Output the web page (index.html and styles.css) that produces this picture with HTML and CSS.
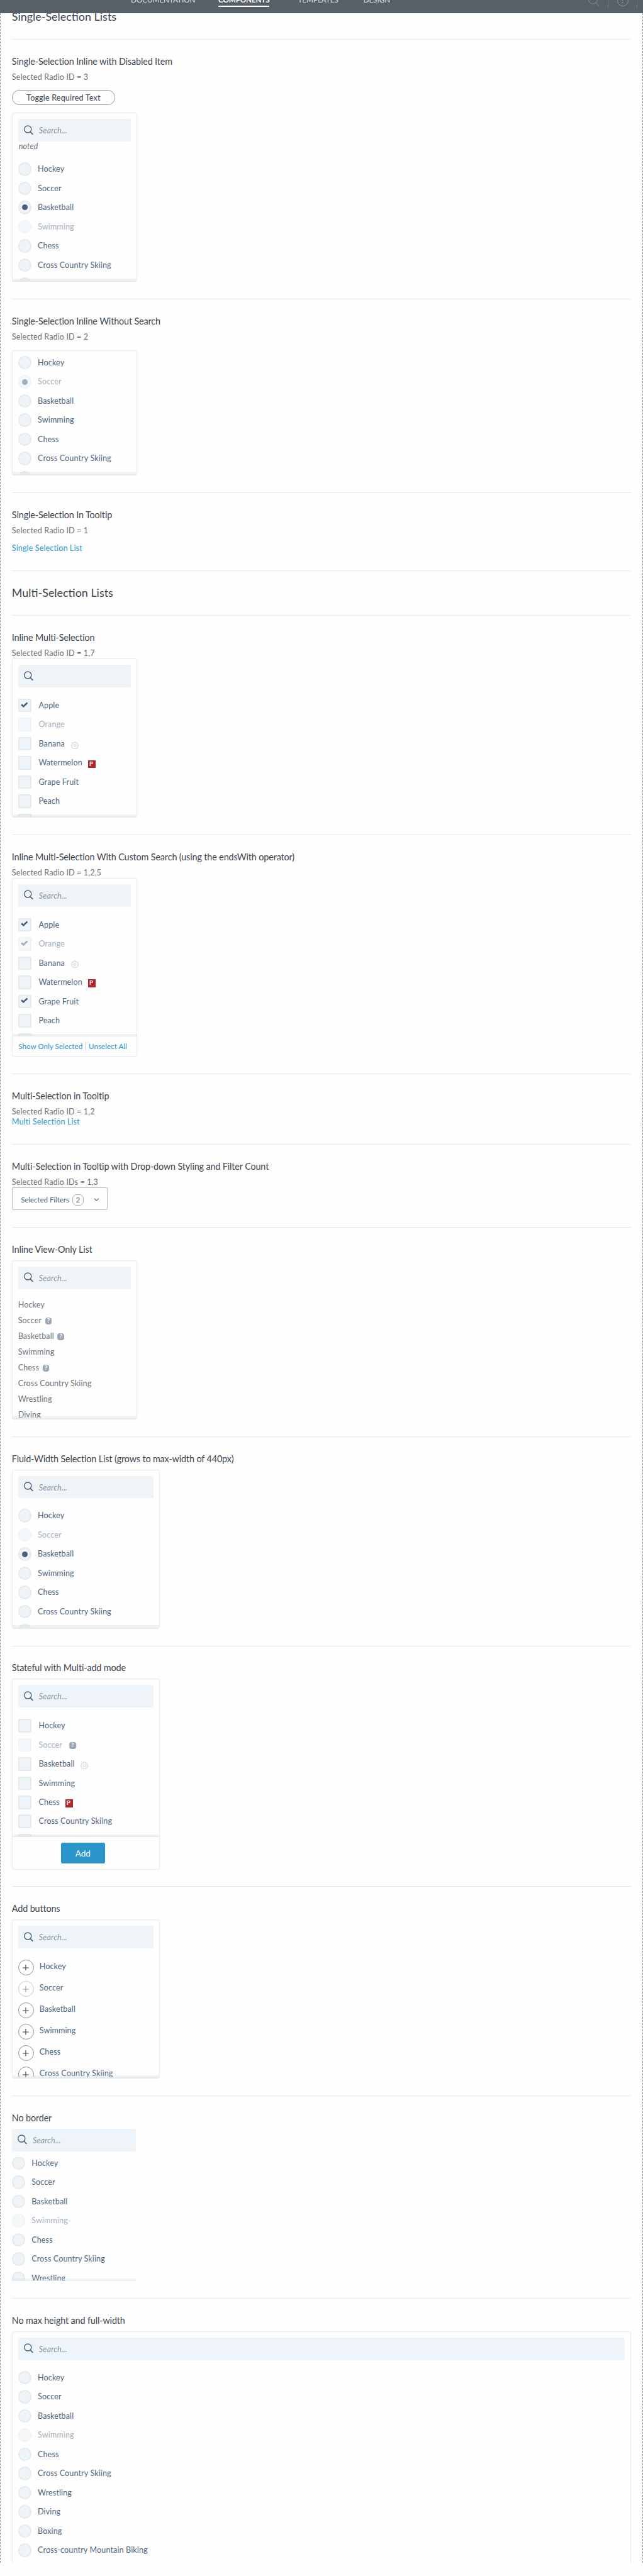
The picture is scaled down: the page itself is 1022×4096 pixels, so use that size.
FILE: index.html
```html
<!DOCTYPE html>
<html lang="en">
<head>
<meta charset="utf-8">
<title>Selection Lists</title>
<link rel="stylesheet" href="styles.css">
</head>
<body>
<svg class="defs" width="0" height="0" aria-hidden="true">
  <symbol id="search" viewBox="0 0 17 17"><circle cx="7" cy="7" r="6.2" fill="none" stroke="currentColor" stroke-width="1.6"/><path d="M11.2 11.6L16 16.4" stroke="currentColor" stroke-width="1.9"/></symbol>
  <symbol id="check" viewBox="0 0 13 10"><path d="M1.2 4.9L4.8 8L11.6 1.6" fill="none" stroke="currentColor" stroke-width="3"/></symbol>
  <symbol id="gear" viewBox="0 0 14 14"><path d="M5.9 .8h2.2l.4 1.7 1 .4 1.5-.9 1.5 1.5-.9 1.5.4 1 1.3.3v1.9l-1.3.4-.4 1 .9 1.5-1.5 1.5-1.5-.9-1 .4-.4 1.4H5.9l-.4-1.4-1-.4-1.5.9-1.5-1.5.9-1.5-.4-1-1.3-.4V6.3l1.300-.3.4-1-.9-1.500L3 2l1.500.9 1-.4z" fill="none" stroke="currentColor" stroke-width=".8"/><circle cx="7" cy="7.2" r="2.1" fill="none" stroke="currentColor" stroke-width=".8"/></symbol>
  <symbol id="plus" viewBox="0 0 11 11"><path d="M5.5 0V11M0 5.5H11" stroke="currentColor" stroke-width="1.2"/></symbol>
</svg>

<header class="topbar">
  <nav class="nav">
    <a class="nav-item nav-docs">DOCUMENTATION</a>
    <a class="nav-item nav-comp active">COMPONENTS</a>
    <a class="nav-item nav-temp">TEMPLATES</a>
    <a class="nav-item nav-design">DESIGN</a>
  </nav>
  <div class="tools">
    <svg class="tool-search" viewBox="0 0 20 20"><circle cx="8.2" cy="7.2" r="7.6" fill="none" stroke="currentColor"/><path d="M13.6 12.6L19.5 19.5" stroke="currentColor"/></svg>
    <i class="tool-line"></i>
    <span class="tool-help">?</span>
    <i class="tool-line"></i>
  </div>
</header>

<main class="page">
  <h2 class="title first">Single-Selection Lists</h2>

  <section class="demo">
    <h3>Single-Selection Inline with Disabled Item</h3>
    <p class="status spaced">Selected Radio ID = 3</p>
    <button class="pill">Toggle Required Text</button>
    <div class="card h300">
      <div class="search"><svg><use href="#search"/></svg><span>Search...</span></div>
      <div class="note">noted</div>
      <ul class="list radios after-note">
        <li><i class="radio"></i>Hockey</li>
        <li><i class="radio"></i>Soccer</li>
        <li><i class="radio on"></i>Basketball</li>
        <li class="off"><i class="radio"></i>Swimming</li>
        <li><i class="radio"></i>Chess</li>
        <li><i class="radio"></i>Cross Country Skiing</li>
        <li><i class="radio"></i></li>
      </ul>
    </div>
  </section>

  <section class="demo">
    <h3>Single-Selection Inline Without Search</h3>
    <p class="status spaced">Selected Radio ID = 2</p>
    <div class="card h222">
      <ul class="list radios no-search">
        <li><i class="radio"></i>Hockey</li>
        <li class="off"><i class="radio on"></i>Soccer</li>
        <li><i class="radio"></i>Basketball</li>
        <li><i class="radio"></i>Swimming</li>
        <li><i class="radio"></i>Chess</li>
        <li><i class="radio"></i>Cross Country Skiing</li>
        <li><i class="radio"></i></li>
      </ul>
    </div>
  </section>

  <section class="demo">
    <h3>Single-Selection In Tooltip</h3>
    <p class="status spaced">Selected Radio ID = 1</p>
    <a class="link">Single Selection List</a>
  </section>

  <h2 class="title">Multi-Selection Lists</h2>

  <section class="demo">
    <h3>Inline Multi-Selection</h3>
    <p class="status">Selected Radio ID = 1,7</p>
    <div class="card">
      <div class="search"><svg><use href="#search"/></svg></div>
      <ul class="list checks">
        <li><i class="box"><svg><use href="#check"/></svg></i>Apple</li>
        <li class="off"><i class="box"></i>Orange</li>
        <li><i class="box"></i>Banana<svg class="gear"><use href="#gear"/></svg></li>
        <li><i class="box"></i>Watermelon<b class="flag">P</b></li>
        <li><i class="box"></i>Grape Fruit</li>
        <li><i class="box"></i>Peach</li>
        <li><i class="box"></i></li>
      </ul>
    </div>
  </section>

  <section class="demo">
    <h3>Inline Multi-Selection With Custom Search (using the endsWith operator)</h3>
    <p class="status">Selected Radio ID = 1,2,5</p>
    <div class="card h317">
      <div class="search"><svg><use href="#search"/></svg><span>Search...</span></div>
      <ul class="list checks">
        <li><i class="box"><svg><use href="#check"/></svg></i>Apple</li>
        <li class="off"><i class="box"><svg><use href="#check"/></svg></i>Orange</li>
        <li><i class="box"></i>Banana<svg class="gear"><use href="#gear"/></svg></li>
        <li><i class="box"></i>Watermelon<b class="flag">P</b></li>
        <li><i class="box"><svg><use href="#check"/></svg></i>Grape Fruit</li>
        <li><i class="box"></i>Peach</li>
        <li><i class="box"></i></li>
      </ul>
      <div class="foot links"><a>Show Only Selected</a><i></i><a>Unselect All</a></div>
    </div>
  </section>

  <section class="demo">
    <h3>Multi-Selection in Tooltip</h3>
    <p class="status">Selected Radio ID = 1,2</p>
    <a class="link">Multi Selection List</a>
  </section>

  <section class="demo">
    <h3>Multi-Selection in Tooltip with Drop-down Styling and Filter Count</h3>
    <p class="status">Selected Radio IDs = 1,3</p>
    <div class="dropdown"><span class="dd-label">Selected Filters</span><span class="count">2</span><svg class="chev" viewBox="0 0 9 6"><path d="M.6 .8L4.5 4.8L8.4 .8" fill="none" stroke="currentColor" stroke-width="1.3"/></svg></div>
  </section>

  <section class="demo">
    <h3>Inline View-Only List</h3>
    <div class="card">
      <div class="search"><svg><use href="#search"/></svg><span>Search...</span></div>
      <ul class="list plain">
        <li>Hockey</li>
        <li>Soccer<b class="help">?</b></li>
        <li>Basketball<b class="help">?</b></li>
        <li>Swimming</li>
        <li>Chess<b class="help">?</b></li>
        <li>Cross Country Skiing</li>
        <li>Wrestling</li>
        <li>Diving</li>
      </ul>
    </div>
  </section>

  <section class="demo">
    <h3>Fluid-Width Selection List (grows to max-width of 440px)</h3>
    <div class="card wide">
      <div class="search"><svg><use href="#search"/></svg><span>Search...</span></div>
      <ul class="list radios">
        <li><i class="radio"></i>Hockey</li>
        <li class="off"><i class="radio"></i>Soccer</li>
        <li><i class="radio on"></i>Basketball</li>
        <li><i class="radio"></i>Swimming</li>
        <li><i class="radio"></i>Chess</li>
        <li><i class="radio"></i>Cross Country Skiing</li>
        <li><i class="radio"></i></li>
      </ul>
    </div>
  </section>

  <section class="demo">
    <h3>Stateful with Multi-add mode</h3>
    <div class="card wide h338">
      <div class="search"><svg><use href="#search"/></svg><span>Search...</span></div>
      <ul class="list checks">
        <li><i class="box"></i>Hockey</li>
        <li class="off"><i class="box"></i><span>Soccer</span><b class="help">?</b></li>
        <li><i class="box"></i>Basketball<svg class="gear"><use href="#gear"/></svg></li>
        <li><i class="box"></i>Swimming</li>
        <li><i class="box"></i>Chess<b class="flag">P</b></li>
        <li><i class="box"></i>Cross Country Skiing</li>
        <li><i class="box"></i></li>
      </ul>
      <div class="foot action"><button class="add">Add</button></div>
    </div>
  </section>

  <section class="demo">
    <h3>Add buttons</h3>
    <div class="card wide">
      <div class="search"><svg><use href="#search"/></svg><span>Search...</span></div>
      <ul class="list adders">
        <li><i class="plus"><svg><use href="#plus"/></svg></i>Hockey</li>
        <li><i class="plus dim"><svg><use href="#plus"/></svg></i>Soccer</li>
        <li><i class="plus"><svg><use href="#plus"/></svg></i>Basketball</li>
        <li><i class="plus"><svg><use href="#plus"/></svg></i>Swimming</li>
        <li><i class="plus"><svg><use href="#plus"/></svg></i>Chess</li>
        <li><i class="plus"><svg><use href="#plus"/></svg></i>Cross Country Skiing</li>
      </ul>
    </div>
  </section>

  <section class="demo">
    <h3>No border</h3>
    <div class="card bare">
      <div class="search"><svg><use href="#search"/></svg><span>Search...</span></div>
      <ul class="list radios">
        <li><i class="radio"></i>Hockey</li>
        <li><i class="radio"></i>Soccer</li>
        <li><i class="radio"></i>Basketball</li>
        <li class="off"><i class="radio"></i>Swimming</li>
        <li><i class="radio"></i>Chess</li>
        <li><i class="radio"></i>Cross Country Skiing</li>
        <li><i class="radio"></i>Wrestling</li>
      </ul>
    </div>
  </section>

  <section class="demo last">
    <h3>No max height and full-width</h3>
    <div class="card full">
      <div class="search"><svg><use href="#search"/></svg><span>Search...</span></div>
      <ul class="list radios">
        <li><i class="radio"></i>Hockey</li>
        <li><i class="radio"></i>Soccer</li>
        <li><i class="radio"></i>Basketball</li>
        <li class="off"><i class="radio"></i>Swimming</li>
        <li><i class="radio"></i>Chess</li>
        <li><i class="radio"></i>Cross Country Skiing</li>
        <li><i class="radio"></i>Wrestling</li>
        <li><i class="radio"></i>Diving</li>
        <li><i class="radio"></i>Boxing</li>
        <li><i class="radio"></i>Cross-country Mountain Biking</li>
      </ul>
    </div>
  </section>
</main>
</body>
</html>
```

FILE: styles.css
```css
/* 1rem equals ten design units */
html { font-size: 8.9687px; }
* { box-sizing: border-box; }
body {
  margin: 0;
  height: 456.7rem;
  overflow: hidden;
  background: #fefefe;
  font-family: Lato, "Liberation Sans", sans-serif;
  font-size: 1.4rem;
  letter-spacing: .01em;
  color: #6b727a;
}
h2, h3, p, ul { margin: 0; padding: 0; font-weight: 400; }
ul { list-style: none; }
i { font-style: normal; }
svg { display: block; flex: none; }
.defs { position: absolute; }

.topbar {
  position: relative;
  z-index: 2;
  height: 2.3rem;
  overflow: hidden;
  display: flex;
  justify-content: space-between;
  background: #575f67;
  color: #dfe2e4;
}
.nav { display: flex; padding-left: 23.2rem; margin-top: -1.05rem; }
.nav-item { flex: none; font-size: 1.3rem; letter-spacing: 0; line-height: 2rem; height: 2.25rem; white-space: nowrap; }
.nav-docs { width: 15.5rem; }
.nav-comp { width: 9rem; margin-right: 5.1rem; }
.nav-temp { width: 11.6rem; }
.active { color: #fff; font-weight: 700; letter-spacing: -.01em; border-bottom: 2px solid #fff; }
.tools { display: flex; flex: none; width: 9.7rem; color: #8e959b; }
.tool-search { width: 2rem; height: 2rem; margin-top: -.8rem; }
.tool-line { width: 1px; height: 1.5rem; background: #737b82; margin-left: 1.5rem; }
.tool-help {
  width: 2rem; height: 2rem; margin: -.9rem 0 0 1.5rem;
  border: 1px solid #8e959b; border-radius: 50%;
  text-align: center; line-height: 1.8rem; font-weight: 700;
}

.page {
  height: 452.1rem;
  overflow: hidden;
  padding: 0 calc(2.1rem - 1px);
  border: dashed #8b929a;
  border-width: 0 1px;
}
.title {
  height: 7.9rem;
  padding-top: calc(2.65rem - 1px);
  border-top: 1px solid #e6eaec;
  font-size: 2rem;
  line-height: 2.5rem;
  letter-spacing: 0;
  color: #3d454d;
}
.title.first { height: 4.6rem; padding: 0; border: 0; }
.title.first { line-height: 1.2rem; }
.demo {
  padding: calc(3rem - 1px) 0 3rem;
  border-top: 1px solid #e6eaec;
}
h3 { font-size: 1.6rem; line-height: 1.95rem; height: 2.9rem; letter-spacing: -.008em; color: #3d454d; white-space: nowrap; }
.status { height: 1.8rem; line-height: 1.75rem; }
.spaced { margin-bottom: 1.4rem; }
.link { display: block; height: 1.8rem; line-height: 1.75rem; color: #2b96cc; }
.pill {
  display: block; width: 18.3rem; height: 2.6rem; margin-bottom: 1.4rem; padding: 0;
  border: 1px solid #9097a0; border-radius: 1.3rem; background: none;
  font: inherit; letter-spacing: .015em; color: #3d454d;
}

.card {
  display: flex;
  flex-direction: column;
  width: 22.2rem;
  height: 28.2rem;
  border: 1px solid #e6eaec;
  border-radius: 3px;
  padding-top: calc(1.1rem - 1px);
  overflow: hidden;
}
.h300 { height: 30rem; }
.h222 { height: 22.2rem; }
.h317 { height: 31.7rem; }
.h338 { height: 33.8rem; }
.wide { width: 26.2rem; }
.search {
  flex: none;
  display: flex;
  height: 4rem;
  margin: 0 calc(1.1rem - 1px);
  padding-left: 1rem;
  background: #eef4f7;
  border-radius: 2px;
  color: #4d6580;
}
.search svg { width: 1.7rem; height: 1.75rem; margin-top: 1.05rem; }
.search span { margin-left: 1rem; font-style: italic; line-height: 4.2rem; color: #8596a8; }
.note { height: 1.8rem; padding-left: 1.1rem; line-height: 1.8rem; font-style: italic; }

.list {
  position: relative;
  flex: 1;
  min-height: 0;
  overflow: hidden;
  padding: 1.9rem calc(1.1rem - 1px) 0;
  border-bottom: 1px solid #e6eaec;
  color: #4d6580;
}
.list::after {
  content: "";
  position: absolute;
  left: 0; right: 0; bottom: 0;
  height: .4rem;
  background: rgba(200, 210, 218, .25);
}
.list li { display: flex; height: 3.4rem; line-height: 2.55rem; white-space: nowrap; }
.checks { padding-top: 2rem; }
.no-search { padding-top: 0; margin-top: -.1rem; }
.off { color: #a6b2bf; }
.off .radio, .off .box { opacity: .5; }
.radio {
  display: flex; flex: none;
  width: 2.4rem; height: 2.4rem; margin-right: 1.1rem;
  border: .3rem solid #e5eaed; border-radius: 50%; background: #eef4f7;
}
.on::after { content: ""; width: 1rem; height: 1rem; margin: auto; border-radius: 50%; background: #4a607d; }
.box {
  display: flex; flex: none;
  width: 2.4rem; height: 2.4rem; margin-right: 1.25rem;
  border: .3rem solid #e5eaed; border-radius: 2px; background: #eef4f7;
}
.box svg { width: 1.3rem; height: 1rem; margin: .3rem 0 0 .3rem; color: #4a607d; }
.gear { width: 1.35rem; height: 1.4rem; margin: .75rem 0 0 1.1rem; color: #b3bdc7; }
.list .flag {
  width: 1.4rem; height: 1.4rem; margin: .7rem 0 0 1rem; padding-left: .25rem;
  background: #b5252c; color: #fff; font-size: 1.05rem; line-height: 1.4rem;
}
.list .help {
  width: 1.2rem; height: 1.2rem; margin: .7rem 0 0 .6rem;
  border-radius: .45rem; background: #9ba7b7; color: #fff;
  font-size: 1.05rem; line-height: 1.2rem; text-align: center;
}
.list.checks .help { margin-left: 1.2rem; }
.plain { color: #6b727a; padding-top: 1.55rem; }
.list.plain li { height: 2.8rem; }
.foot { flex: none; display: flex; }
.links { height: calc(3.6rem - 1px); padding: 1rem 0 0 1.05rem; font-size: 1.3rem; line-height: 1.5rem; letter-spacing: 0; color: #2b96cc; }
.links i { width: 1px; height: 1.4rem; margin: 0 .5rem; background: #bfc6cc; }
.action { height: calc(5.7rem - 1px); justify-content: center; padding: 1rem 1rem 0 0; }
.add { width: 7.8rem; height: 3.6rem; padding: 0; border: 0; border-radius: 2px; background: #2b96cc; color: #fff; font: inherit; font-size: 1.5rem; }

.adders { padding-top: 2rem; }
.list.adders li { height: 3.8rem; }
.plus {
  display: flex; flex: none; width: 2.8rem; height: 2.8rem; margin-right: 1rem;
  border: 1px solid #8e959d; border-radius: 50%; color: #3d454d;
}
.plus svg { width: 1.1rem; height: 1.1rem; margin: auto; }
.dim { opacity: .5; }

.dropdown {
  display: flex; width: 17rem; height: 4rem; padding: 0 0 0 1.5rem;
  border: 1px solid #b4bac1; border-radius: 2px; color: #4d6580;
}
.dd-label { font-size: 1.3rem; letter-spacing: -.01em; line-height: 4.2rem; width: 9.1rem; white-space: nowrap; }
.count {
  width: 2rem; height: 1.95rem; margin-top: 1.1rem; border: 1px solid #a3aab2; border-radius: .8rem;
  font-size: 1.3rem; line-height: 1.8rem; text-align: center; color: #6b727a;
}
.chev { width: .95rem; height: .6rem; margin: 1.75rem 0 0 1.8rem; }

.bare { width: 22rem; height: 27rem; padding: 0; border: 0; border-radius: 0; }
.bare .search { margin: 0; }
.bare .list { margin-top: 1rem; padding: 0; }
.bare li:first-child { margin-top: -.1rem; }
.full { width: 100%; height: 42rem; }
```
